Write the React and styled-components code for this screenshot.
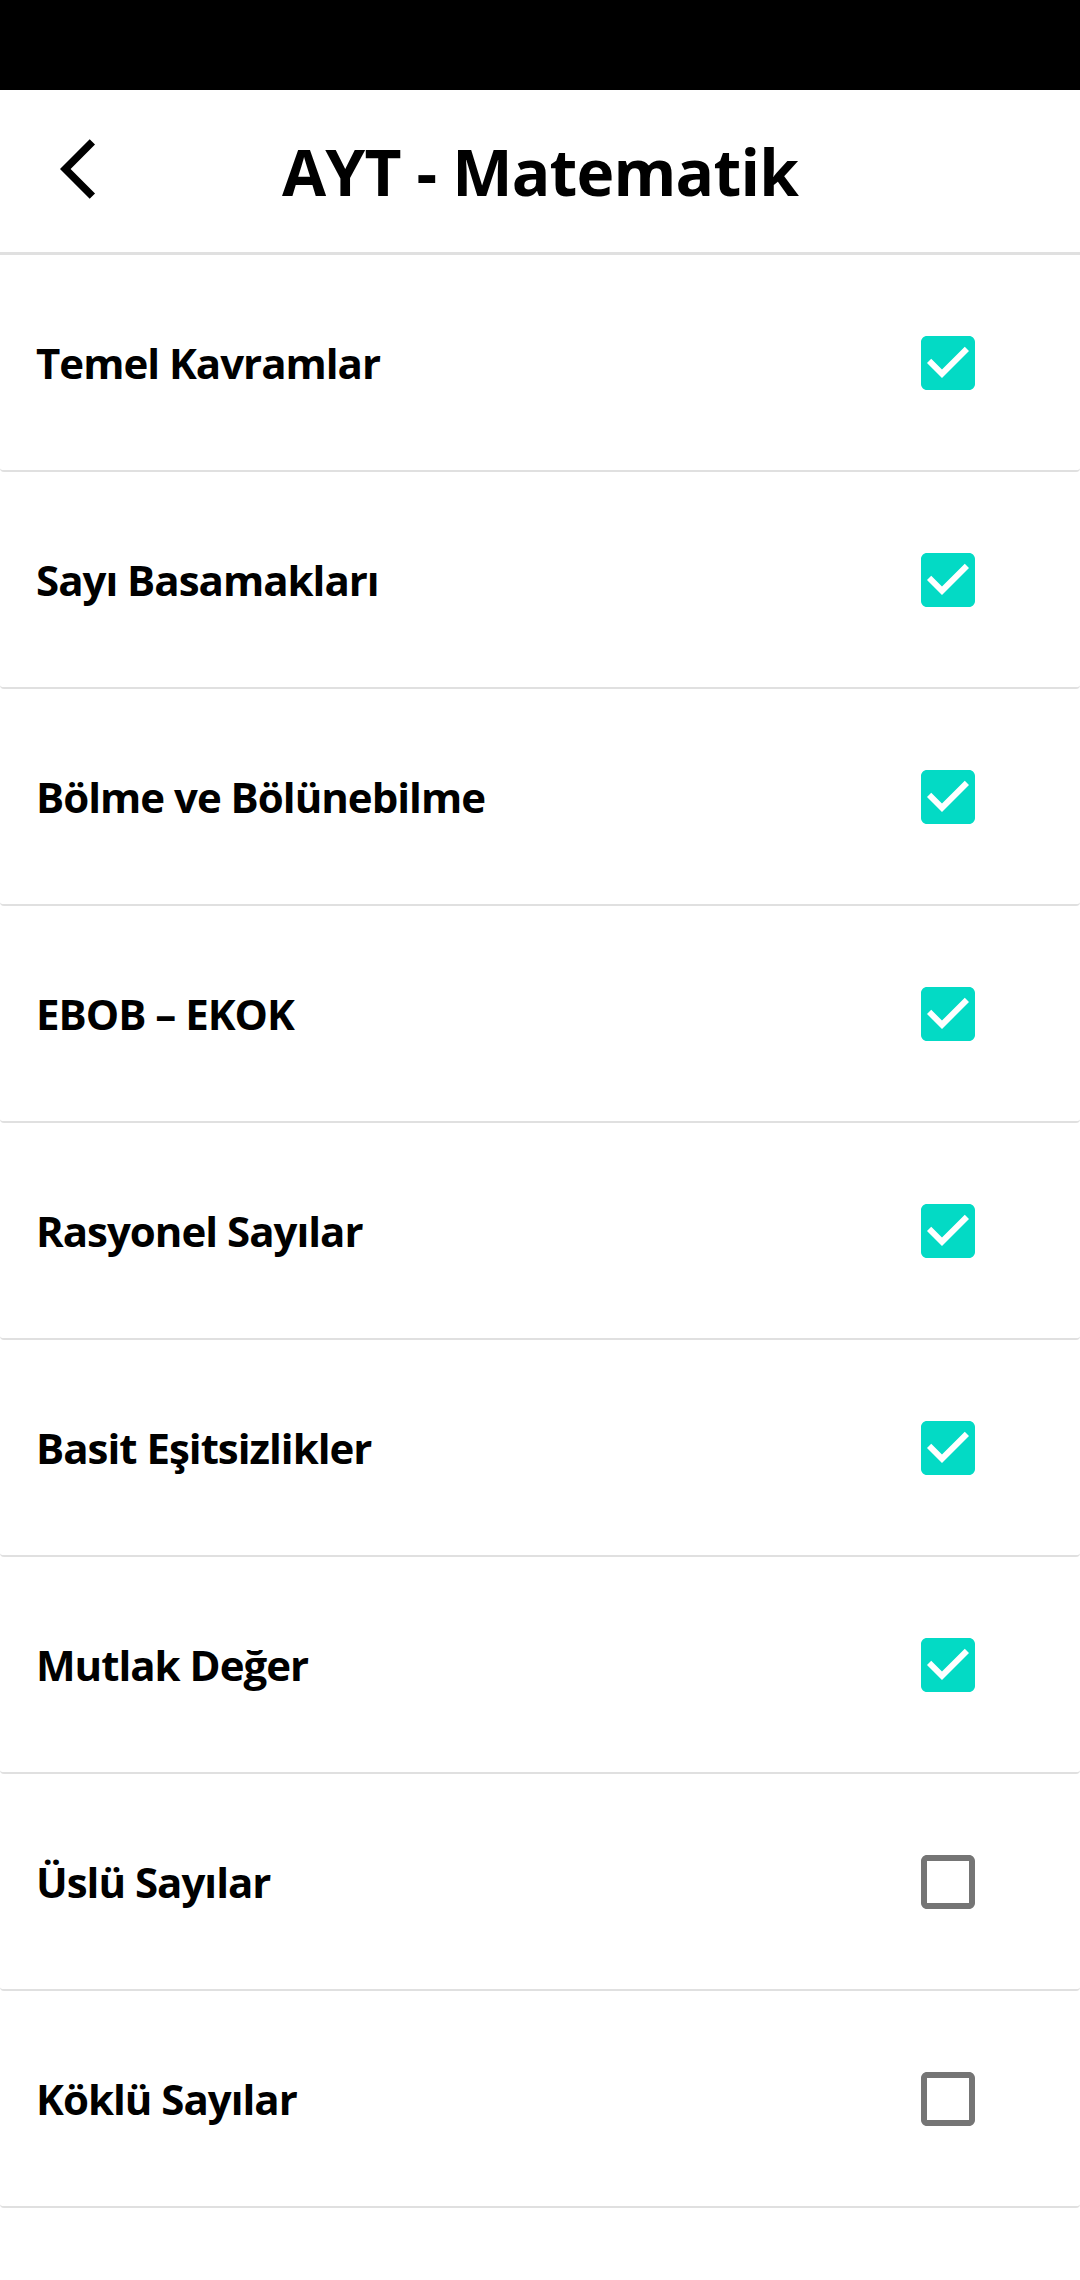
import styled, { createGlobalStyle } from "styled-components";

const GlobalStyle = createGlobalStyle`
    body {
        margin: 0;
        background: #ffffff;
        font-family: "Open Sans", "Noto Sans", sans-serif;
        color: #000000;
    }
`

const topics = [
    { title: "Temel Kavramlar", done: true },
    { title: "Sayı Basamakları", done: true },
    { title: "Bölme ve Bölünebilme", done: true },
    { title: "EBOB – EKOK", done: true },
    { title: "Rasyonel Sayılar", done: true },
    { title: "Basit Eşitsizlikler", done: true },
    { title: "Mutlak Değer", done: true },
    { title: "Üslü Sayılar", done: false },
    { title: "Köklü Sayılar", done: false },
]

function BackIcon(){
    return (
        <svg width="72" height="72" viewBox="0 0 24 24">
            <path fill="#000" d="M11.67 3.87L9.9 2.1 0 12l9.9 9.9 1.77-1.77L3.54 12z" />
        </svg>
    )
}

function CheckIcon({ checked }){
    if (checked) {
        return (
            <svg width="72" height="72" viewBox="0 0 24 24">
                <path
                    fill="#03DAC5"
                    d="M19 3H5c-1.11 0-2 .9-2 2v14c0 1.1.89 2 2 2h14c1.11 0 2-.9 2-2V5c0-1.1-.89-2-2-2zm-9 14l-5-5 1.41-1.41L10 14.17l7.59-7.59L19 8l-9 9z"
                />
            </svg>
        )
    }
    return (
        <svg width="72" height="72" viewBox="0 0 24 24">
            <path
                fill="#757575"
                d="M19 5v14H5V5h14m0-2H5c-1.1 0-2 .9-2 2v14c0 1.1.9 2 2 2h14c1.1 0 2-.9 2-2V5c0-1.1-.9-2-2-2z"
            />
        </svg>
    )
}

function App(){
    return (
        <Screen>
            <GlobalStyle />
            <StatusBar />
            <Header>
                <BackButton aria-label="Geri">
                    <BackIcon />
                </BackButton>
                <Title>AYT - Matematik</Title>
                <span />
            </Header>
            <List>
                {topics.map((t) => (
                    <Row key={t.title}>
                        <RowTitle>{t.title}</RowTitle>
                        <CheckIcon checked={t.done} />
                    </Row>
                ))}
            </List>
        </Screen>
    )
}

const Screen = styled.div`
    width: 1080px;
    min-height: 2280px;
    background: #ffffff;
`

const StatusBar = styled.div`
    height: 90px;
    background: #000000;
`

const Header = styled.header`
    height: 162px;
    display: grid;
    grid-template-columns: 1fr auto 1fr;
    align-items: center;
    border-bottom: 3px solid #e0e0e0;
`

const BackButton = styled.button`
    justify-self: start;
    display: flex;
    align-items: center;
    padding: 0;
    margin-left: 60px;
    margin-top: -4px;
    border: none;
    background: none;
`

const Title = styled.h1`
    margin: 0;
    font-size: 64px;
    font-weight: 700;
    letter-spacing: -0.8px;
`

const List = styled.div`
    display: flex;
    flex-direction: column;
`

const Row = styled.div`
    height: 215px;
    display: flex;
    align-items: center;
    justify-content: space-between;
    padding: 0 96px 0 36px;
    background: #ffffff;
    border-bottom: 2px solid #e0e0e0;
    border-radius: 4px;
`

const RowTitle = styled.span`
    font-size: 42px;
    font-weight: 700;
    letter-spacing: -1px;
`

export default App
